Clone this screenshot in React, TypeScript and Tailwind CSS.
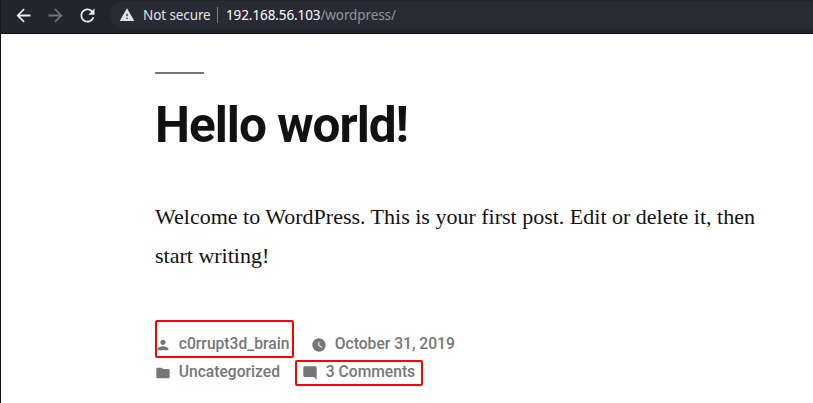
import React from "react";

function Glyph({ d, className }: { d: string; className: string }) {
  return (
    <svg viewBox="0 0 24 24" fill="currentColor" className={`block shrink-0 ${className}`} aria-hidden="true">
      <path d={d} />
    </svg>
  );
}

const BACK = "M20 10.85H7.83l5.59-5.44L12 4l-8 8 8 8 1.41-1.41L7.83 13.15H20v-2.3z";
const FORWARD = "M12 4l-1.41 1.41L16.17 10.85H4v2.3h12.17l-5.58 5.44L12 20l8-8z";
const RELOAD =
  "M17.65 6.35C16.2 4.9 14.21 4 12 4c-4.42 0-7.99 3.58-7.99 8s3.57 8 7.99 8c3.73 0 6.84-2.55 7.73-6h-2.08c-.82 2.33-3.04 4-5.65 4-3.31 0-6-2.69-6-6s2.69-6 6-6c1.66 0 3.14.69 4.22 1.78L13 11h7V4l-2.35 2.35z";
const WARNING = "M1 21h22L12 2 1 21zm12-3h-2v-2h2v2zm0-4h-2v-4h2v4z";
const PERSON =
  "M12 12c2.21 0 4-1.79 4-4s-1.79-4-4-4-4 1.79-4 4 1.79 4 4 4zm0 2c-2.67 0-8 1.34-8 4v2h16v-2c0-2.66-5.33-4-8-4z";
const CLOCK =
  "M12 2C6.5 2 2 6.5 2 12s4.5 10 10 10 10-4.5 10-10S17.5 2 12 2zm4.2 14.2L11 13V7h1.5v5.2l4.5 2.7-.8 1.3z";
const FOLDER = "M10 4H4c-1.1 0-1.99.9-1.99 2L2 18c0 1.1.9 2 2 2h16c1.1 0 2-.9 2-2V8c0-1.1-.9-2-2-2h-8l-2-2z";
const COMMENT = "M21.99 4c0-1.1-.89-2-1.99-2H4c-1.1 0-2 .9-2 2v12c0 1.1.9 2 2 2h14l4 4-.01-18z";

function Meta({ icon, children }: { icon: string; children: React.ReactNode }) {
  return (
    <span className="flex h-7 items-center gap-[7.8px] whitespace-nowrap">
      <Glyph d={icon} className="mt-px h-4 w-4" />
      <span>{children}</span>
    </span>
  );
}

function Toolbar() {
  return (
    <header className="flex h-[34px] items-start border-b border-[#08080d] bg-[#22242e] pl-[11.5px] font-['Noto_Sans',sans-serif]">
      <nav className="flex gap-[11px] pt-[4.5px] text-[#ebebec]">
        <Glyph d={BACK} className="h-[21px] w-[21px]" />
        <Glyph d={FORWARD} className="h-[21px] w-[21px] text-[#737378]" />
        <Glyph d={RELOAD} className="h-[21px] w-[21px]" />
      </nav>
      <div className="ml-[12.5px] mt-px flex h-7 flex-1 items-center rounded-l-full bg-[#282a35] pl-[9px] text-[13.5px] tracking-[-0.1px] text-[#e2e2e4]">
        <Glyph d={WARNING} className="h-4 w-4" />
        <span className="ml-2 w-[68px] whitespace-nowrap">Not secure</span>
        <span className="ml-[6px] h-4 w-px bg-[#7d7e85]" />
        <span className="ml-2 whitespace-nowrap text-white">
          192.168.56.103<span className="text-[#95959b]">/wordpress/</span>
        </span>
      </div>
    </header>
  );
}

export default function App() {
  return (
    <div className="h-[403px] w-[813px] overflow-hidden border-l border-[#14151c] bg-white">
      <Toolbar />
      <article className="pl-[154px] pt-[38px] text-[#111]">
        <div className="h-[2px] w-[49px] bg-[#767676]" />
        <h1 className="mt-[21px] h-[60px] whitespace-nowrap font-['Roboto',sans-serif] text-[49.5px] font-bold leading-[60px] tracking-[-0.99px]">
          Hello world!
        </h1>
        <p className="mt-[42px] w-[620px] font-['Liberation_Serif',serif] text-[22px] leading-[39px]">
          Welcome to WordPress. This is your first post. Edit or delete it, then start writing!
        </p>
        <footer className="mt-[45px] font-['Roboto',sans-serif] text-[15.64px] font-medium leading-[28px] text-[#767676]">
          <div className="flex h-[38px] items-start">
            <div className="h-[38px] w-[139px] rounded-[2px] border-2 border-[#f00] pt-[8px]">
              <div className="-ml-[2px]">
                <Meta icon={PERSON}>c0rrupt3d_brain</Meta>
              </div>
            </div>
            <div className="ml-[17px] pt-[10px]">
              <Meta icon={CLOCK}>October 31, 2019</Meta>
            </div>
          </div>
          <div className="flex items-start">
            <div className="w-[140px]">
              <Meta icon={FOLDER}>Uncategorized</Meta>
            </div>
            <div className="mt-[2px] flex h-[26px] w-[128px] items-start rounded-[2px] border-2 border-[#f00] pl-[5px]">
              <div className="-mt-[4px]">
                <Meta icon={COMMENT}>3 Comments</Meta>
              </div>
            </div>
          </div>
        </footer>
      </article>
    </div>
  );
}
